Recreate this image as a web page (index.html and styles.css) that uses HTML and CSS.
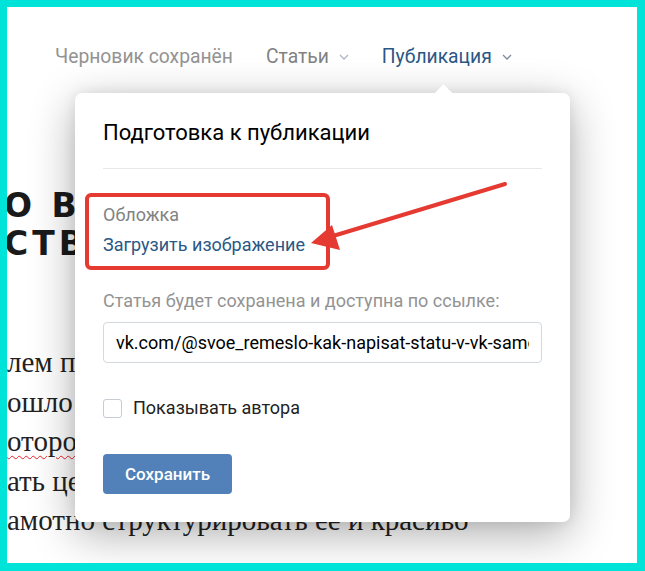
FILE: index.html
```html
<!DOCTYPE html>
<html>
<head>
    <title>Публикация</title>
    <link rel="stylesheet" href="styles.css">
</head>
<body>
    <div class="frame">
        <nav class="topbar">
            <span class="nav-item saved">Черновик сохранён</span>
            <span class="nav-item">Статьи
                <svg class="chevron" width="10" height="6" viewBox="0 0 10 6"><polyline points="1,1 5,5 9,1" fill="none" stroke="currentColor" stroke-width="1.3"/></svg>
            </span>
            <span class="nav-item active">Публикация
                <svg class="chevron" width="10" height="6" viewBox="0 0 10 6"><polyline points="1,1 5,5 9,1" fill="none" stroke="currentColor" stroke-width="1.3"/></svg>
            </span>
        </nav>

        <article class="article">
            <h1 class="article-title">О возможностях<br>ства статей</h1>
            <p class="article-text">
                лем поделиться опытом<br>
                ошло время рассказать о<br>
                <span class="typo">отором</span> пойдёт речь<br>
                ать цель и задачи<br>
                амотно структурировать ее и красиво
            </p>
        </article>

        <!-- окно публикации -->
        <div class="popup">
            <div class="popup-head">Подготовка к публикации</div>

            <div class="cover-label">Обложка</div>
            <a class="cover-link" href="#">Загрузить изображение</a>

            <div class="link-label">Статья будет сохранена и доступна по ссылке:</div>
            <input class="link-input" type="text" value="vk.com/@svoe_remeslo-kak-napisat-statu-v-vk-samostoyatelno">

            <label class="author-row">
                <span class="checkbox"></span>
                Показывать автора
            </label>

            <button class="save-btn">Сохранить</button>

            <div class="mark"></div>
        </div>

        <svg class="pointer" width="630" height="556" viewBox="0 0 630 556">
            <line x1="498" y1="177" x2="326" y2="229" stroke="#e53a31" stroke-width="4" stroke-linecap="round"/>
            <polygon points="304,236 325,218 333,243" fill="#e53a31"/>
        </svg>
    </div>
</body>
</html>
```

FILE: styles.css
```css
* {
    box-sizing: border-box;
}
body {
    margin: 0;
    background: #00e3d8;
    font-family: Roboto, "Liberation Sans", sans-serif;
}
.frame {
    position: relative;
    width: 630px;
    height: 556px;
    margin: 7px;
    background: #fff;
    overflow: hidden;
}

.topbar {
    display: flex;
    align-items: center;
    padding: 39px 0 0 48px;
    height: 61px;
    font-size: 19.3px;
    line-height: 22px;
}
.nav-item {
    display: flex;
    align-items: center;
    margin-right: 33px;
    color: #828282;
}
.nav-item.saved {
    color: #939393;
}
.nav-item.active {
    color: #2a5885;
}
.chevron {
    margin-left: 10px;
    color: #aeb7c2;
}
.active .chevron {
    color: #7d8ba0;
}

.article {
    margin-top: 119px;
}
.article-title {
    margin: 0 0 80px -3px;
    font-family: "DejaVu Sans", Arial, sans-serif;
    font-weight: bold;
    font-size: 33px;
    line-height: 38px;
    letter-spacing: 4px;
    text-transform: uppercase;
    color: #1a1a1a;
    white-space: nowrap;
}
.article-text {
    margin: 0;
    font-family: "Liberation Serif", "Times New Roman", serif;
    font-size: 29px;
    line-height: 39.5px;
    color: #222;
    white-space: nowrap;
}
.typo {
    text-decoration: underline wavy #e8232a;
    text-decoration-thickness: 1px;
    text-underline-offset: 4px;
}

.popup {
    position: absolute;
    left: 68px;
    top: 86px;
    width: 495px;
    height: 429px;
    padding: 26px 28px 28px;
    background: #fff;
    border-radius: 7px;
    box-shadow: 0 12px 45px rgba(0, 0, 0, 0.32), 0 0 14px rgba(0, 0, 0, 0.08);
    font-size: 18px;
    line-height: 22px;
}
.popup::before {
    content: "";
    position: absolute;
    top: -6px;
    left: 362px;
    width: 13px;
    height: 13px;
    background: #fff;
    transform: rotate(45deg);
}
.popup-head {
    font-size: 22px;
    line-height: 28px;
    color: #000;
    padding-bottom: 21px;
    border-bottom: 1px solid #e7e8ec;
}
.cover-label {
    margin-top: 35px;
    color: #828282;
}
.cover-link {
    display: block;
    margin-top: 8px;
    color: #2a5885;
    text-decoration: none;
}
.link-label {
    margin-top: 34px;
    color: #939393;
}
.link-input {
    display: block;
    width: 100%;
    height: 41px;
    margin-top: 10px;
    padding: 0 12px;
    border: 1px solid #d3d9de;
    border-radius: 4px;
    font-family: Roboto, sans-serif;
    font-size: 18px;
    color: #000;
    outline: none;
}
.author-row {
    display: flex;
    align-items: center;
    margin-top: 34px;
    color: #222;
}
.checkbox {
    width: 19px;
    height: 19px;
    margin-right: 11px;
    border: 1px solid #c5ccd4;
    border-radius: 3px;
}
.save-btn {
    display: block;
    width: 129px;
    height: 40px;
    margin-top: 35px;
    border: none;
    border-radius: 4px;
    background: #5181b8;
    color: #fff;
    font-family: Roboto, sans-serif;
    font-size: 17px;
    font-weight: 500;
}

.mark {
    position: absolute;
    left: 10px;
    top: 100px;
    width: 245px;
    height: 77px;
    border: 4px solid #e53a31;
    border-radius: 6px;
}
.pointer {
    position: absolute;
    left: 0;
    top: 0;
}
```
